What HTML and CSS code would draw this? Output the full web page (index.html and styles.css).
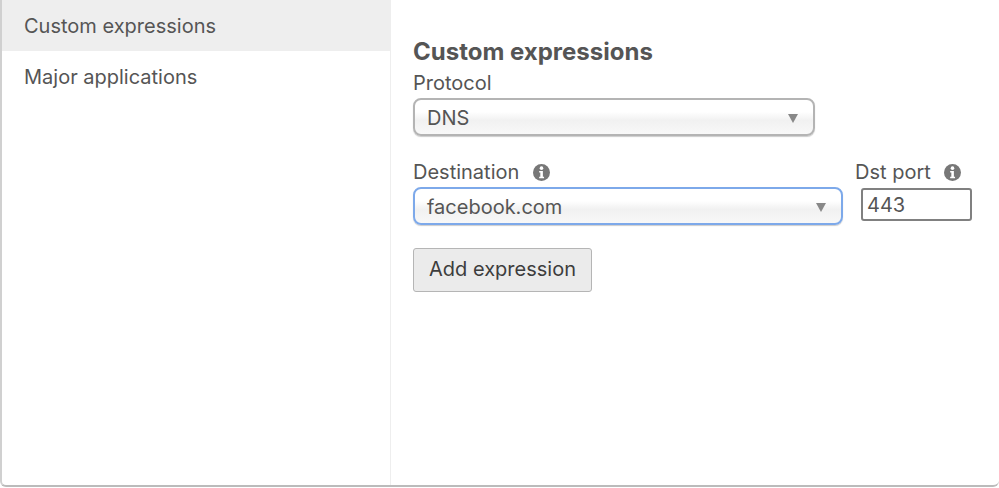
FILE: index.html
```html
<!DOCTYPE html>
<html lang="en">
<head>
	<meta charset="UTF-8">
	<title>Custom expressions</title>
	<link rel="stylesheet" href="styles.css">
</head>
<body>
	<div class="dialog">
		<ul class="side">
			<li class="current">Custom expressions</li>
			<li>Major applications</li>
		</ul>
		<div class="main">
			<h2>Custom expressions</h2>
			<div class="field">
				<label>Protocol</label>
				<div class="select protocol">DNS<span class="caret"></span></div>
			</div>
			<div class="row">
				<div class="field">
					<label>Destination <svg class="info" viewBox="0 0 16 16"><circle cx="8" cy="8" r="8" fill="#777"/><circle cx="8" cy="3.9" r="1.7" fill="#fff"/><path d="M5.8 6.6h3.5v5.4h1.1v1.5H5.8V12h1.1V8.100H5.800z" fill="#fff"/></svg></label>
					<div class="select dest">facebook.com<span class="caret"></span></div>
				</div>
				<div class="field port">
					<label>Dst port <svg class="info" viewBox="0 0 16 16"><circle cx="8" cy="8" r="8" fill="#777"/><circle cx="8" cy="3.9" r="1.7" fill="#fff"/><path d="M5.8 6.6h3.5v5.4h1.1v1.5H5.8V12h1.1V8.100H5.800z" fill="#fff"/></svg></label>
					<input class="port-input" type="text" value="443">
				</div>
			</div>
			<button class="add">Add expression</button>
		</div>
	</div>
</body>
</html>
```

FILE: styles.css
```css
* {
	padding: 0;
	margin: 0;
	box-sizing: border-box;
}
ul {
	list-style: none;
}
body {
	width: 999px;
	height: 488px;
	overflow: hidden;
	background: #fff;
	font-family: Inter, "Liberation Sans", sans-serif;
	color: #555;
}
.dialog {
	display: flex;
	height: 487px;
	border-left: 2px solid #d0d0d0;
	border-bottom: 2px solid #bbb;
	border-radius: 0 0 6px 6px;
}
.side {
	width: 389px;
	border-right: 1px solid #eee;
	font-size: 20px;
}
.side li {
	height: 51px;
	line-height: 52px;
	padding-left: 22px;
}
.side li.current {
	background: #eee;
}
.main {
	padding: 37px 0 0 22px;
	flex: 1;
}
h2 {
	font-size: 24px;
	line-height: 30px;
	font-weight: 700;
	margin-bottom: 2px;
}
label {
	display: block;
	font-size: 20px;
	line-height: 29px;
	white-space: nowrap;
}
.info {
	width: 17px;
	height: 17px;
	margin-left: 8px;
	vertical-align: -2px;
}
.select {
	position: relative;
	height: 38px;
	line-height: 37px;
	padding-left: 12px;
	font-size: 20px;
	border: 2px solid #b4b4b4;
	border-radius: 8px;
	background: linear-gradient(#fff 35%, #f1f1f1 60%, #f8f8f8);
	box-shadow: 0 1px 1px #ccc;
}
.protocol {
	width: 402px;
}
.dest {
	width: 430px;
	border-color: #7da9ea;
}
.caret {
	position: absolute;
	top: 14px;
	right: 15px;
	border-left: 5px solid transparent;
	border-right: 5px solid transparent;
	border-top: 9px solid #888;
}
.row {
	display: flex;
	margin-top: 22px;
}
.port {
	margin-left: 12px;
}
.port-input {
	display: block;
	width: 111px;
	height: 33px;
	margin: 1px 0 0 6px;
	padding-left: 4px;
	font: 20px Inter, "Liberation Sans", sans-serif;
	color: #555;
	border: 2px solid #808080;
	border-radius: 3px;
	background: #fff;
}
.add {
	display: block;
	width: 179px;
	height: 44px;
	margin-top: 23px;
	padding-bottom: 2px;
	font: 20px Inter, "Liberation Sans", sans-serif;
	color: #3d3d3d;
	background: #ebebeb;
	border: 1px solid #b5b5b5;
	border-radius: 3px;
}
```
